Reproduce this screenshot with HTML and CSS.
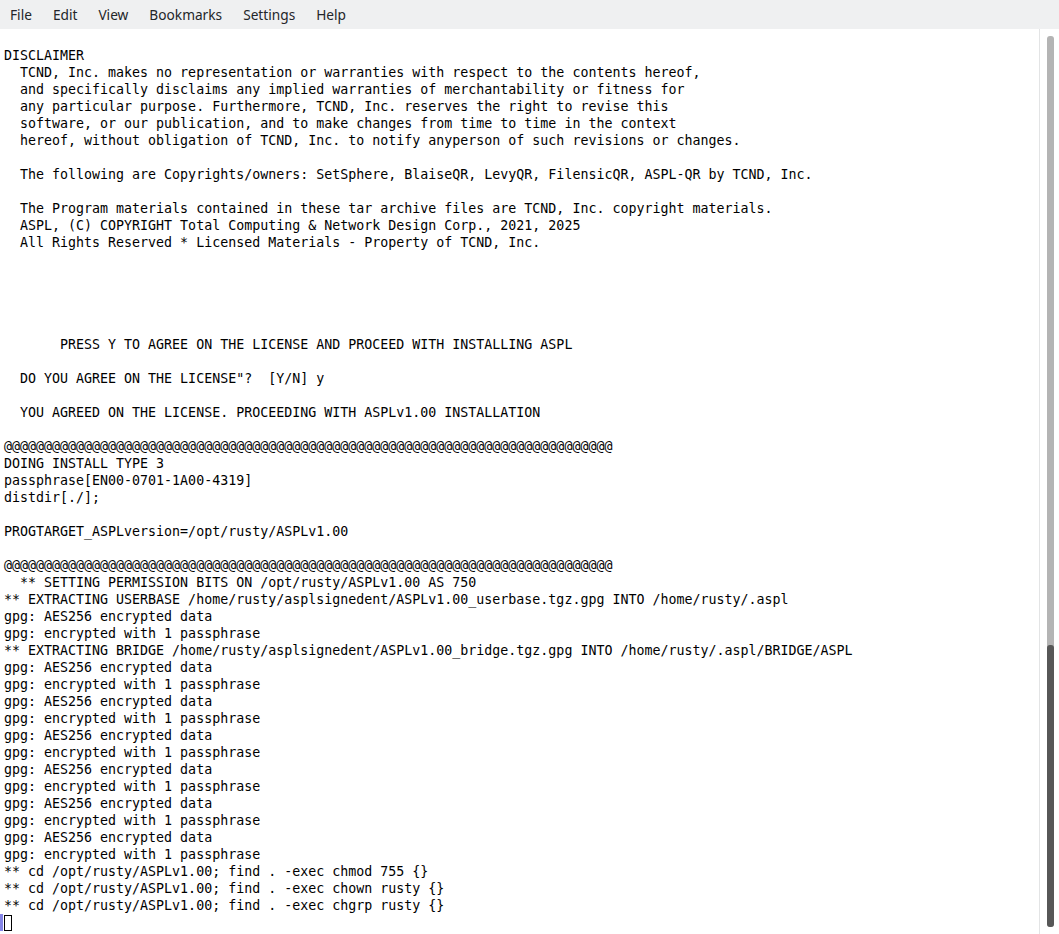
FILE: index.html
```html
<!DOCTYPE html>
<html>
<head>
<meta charset="utf-8">
<title>Konsole</title>
<link rel="stylesheet" href="styles.css">
</head>
<body>
<div class="window">
  <nav class="menubar">
    <span class="menu-item">File</span>
    <span class="menu-item">Edit</span>
    <span class="menu-item">View</span>
    <span class="menu-item">Bookmarks</span>
    <span class="menu-item">Settings</span>
    <span class="menu-item">Help</span>
  </nav>
  <div class="main">
    <div class="term">
<pre class="output">

DISCLAIMER
  TCND, Inc. makes no representation or warranties with respect to the contents hereof,
  and specifically disclaims any implied warranties of merchantability or fitness for
  any particular purpose. Furthermore, TCND, Inc. reserves the right to revise this
  software, or our publication, and to make changes from time to time in the context
  hereof, without obligation of TCND, Inc. to notify anyperson of such revisions or changes.

  The following are Copyrights/owners: SetSphere, BlaiseQR, LevyQR, FilensicQR, ASPL-QR by TCND, Inc.

  The Program materials contained in these tar archive files are TCND, Inc. copyright materials.
  ASPL, (C) COPYRIGHT Total Computing &amp; Network Design Corp., 2021, 2025
  All Rights Reserved * Licensed Materials - Property of TCND, Inc.





       PRESS Y TO AGREE ON THE LICENSE AND PROCEED WITH INSTALLING ASPL

  DO YOU AGREE ON THE LICENSE"?  [Y/N] y

  YOU AGREED ON THE LICENSE. PROCEEDING WITH ASPLv1.00 INSTALLATION

@@@@@@@@@@@@@@@@@@@@@@@@@@@@@@@@@@@@@@@@@@@@@@@@@@@@@@@@@@@@@@@@@@@@@@@@@@@@
DOING INSTALL TYPE 3
passphrase[EN00-0701-1A00-4319]
distdir[./];

PROGTARGET_ASPLversion=/opt/rusty/ASPLv1.00

@@@@@@@@@@@@@@@@@@@@@@@@@@@@@@@@@@@@@@@@@@@@@@@@@@@@@@@@@@@@@@@@@@@@@@@@@@@@
  ** SETTING PERMISSION BITS ON /opt/rusty/ASPLv1.00 AS 750
** EXTRACTING USERBASE /home/rusty/asplsignedent/ASPLv1.00_userbase.tgz.gpg INTO /home/rusty/.aspl
gpg: AES256 encrypted data
gpg: encrypted with 1 passphrase
** EXTRACTING BRIDGE /home/rusty/asplsignedent/ASPLv1.00_bridge.tgz.gpg INTO /home/rusty/.aspl/BRIDGE/ASPL
gpg: AES256 encrypted data
gpg: encrypted with 1 passphrase
gpg: AES256 encrypted data
gpg: encrypted with 1 passphrase
gpg: AES256 encrypted data
gpg: encrypted with 1 passphrase
gpg: AES256 encrypted data
gpg: encrypted with 1 passphrase
gpg: AES256 encrypted data
gpg: encrypted with 1 passphrase
gpg: AES256 encrypted data
gpg: encrypted with 1 passphrase
** cd /opt/rusty/ASPLv1.00; find . -exec chmod 755 {}
** cd /opt/rusty/ASPLv1.00; find . -exec chown rusty {}
** cd /opt/rusty/ASPLv1.00; find . -exec chgrp rusty {}</pre>
      <div class="cursor-line"><span class="mark"></span><span class="cursor"></span></div>
    </div>
    <div class="scrollbar">
      <div class="track"><div class="thumb"></div></div>
    </div>
  </div>
</div>
</body>
</html>
```

FILE: styles.css
```css
html, body {
  margin: 0;
  padding: 0;
  background: #ffffff;
}

.window {
  width: 1059px;
  height: 934px;
  display: flex;
  flex-direction: column;
  overflow: hidden;
}

.menubar {
  height: 29px;
  flex: 0 0 29px;
  box-sizing: border-box;
  padding-bottom: 1px;
  background: #eff0f1;
  display: flex;
  align-items: center;
  font-family: "Noto Sans", sans-serif;
  font-size: 13.7px;
  color: #232629;
}

.menu-item {
  padding: 0 10px;
  margin-right: 1px;
}

.main {
  flex: 1;
  display: flex;
  min-height: 0;
}

.term {
  flex: 1;
  background: #ffffff;
  padding-left: 4px;
  padding-top: 1px;
  overflow: hidden;
}

.output {
  margin: 0;
  font-family: "DejaVu Sans Mono", monospace;
  font-size: 13.3px;
  line-height: 17px;
  color: #000000;
  white-space: pre;
}

.cursor-line {
  height: 17px;
  display: flex;
  margin-left: -4px;
}

.mark {
  width: 3px;
  height: 17px;
  background: #8484e6;
  margin-right: 1px;
}

.cursor {
  width: 8px;
  height: 16px;
  margin-top: 1px;
  box-sizing: border-box;
  border: 1px solid #000000;
}

.scrollbar {
  width: 20px;
  flex: 0 0 20px;
  border-left: 1px solid #e3e4e5;
  background: #ffffff;
  padding: 7px 0 7px 7px;
  box-sizing: border-box;
}

.track {
  width: 7px;
  height: 100%;
  background: #b4b4b4;
  border-radius: 3px;
  display: flex;
  flex-direction: column;
  justify-content: flex-end;
}

.thumb {
  height: 282px;
  background: #575757;
  border-radius: 3px;
}
```
